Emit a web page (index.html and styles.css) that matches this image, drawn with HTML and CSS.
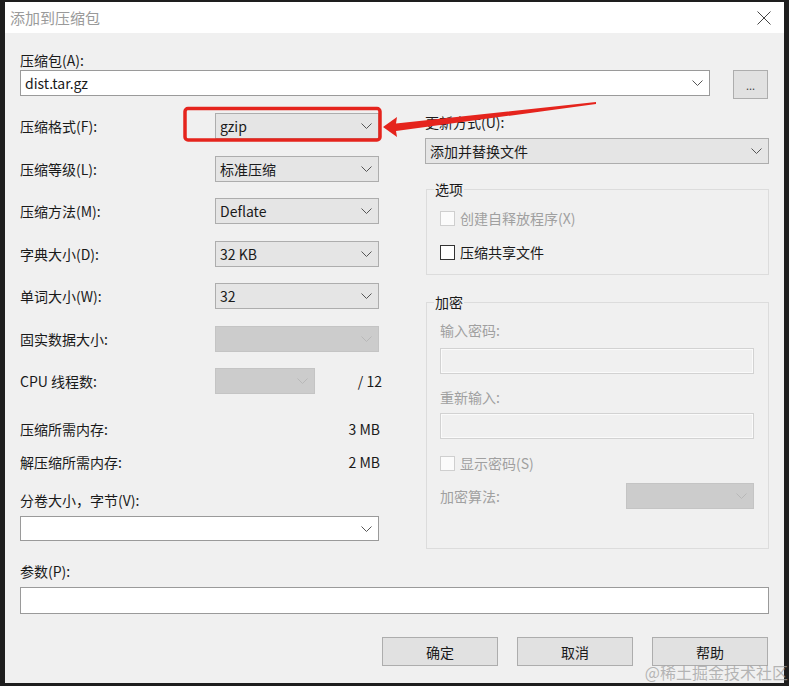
FILE: index.html
```html
<!DOCTYPE html>
<html lang="zh-CN">

<head>
  <meta charset="UTF-8">
  <title>添加到压缩包</title>
  <link rel="stylesheet" href="styles.css">
</head>

<body>
  <div class="screen">
    <div class="window">
      <div class="titlebar">
        <span class="title">添加到压缩包</span>
        <svg class="close" width="14" height="14" viewBox="0 0 14 14">
          <path d="M0.5 0.5 L13.5 13.5 M13.5 0.5 L0.5 13.5" stroke="#444" stroke-width="1" fill="none"/>
        </svg>
      </div>

      <div class="content">
        <div class="label">压缩包(A):</div>
        <div class="archive-row">
          <div class="combo white archive">
            <span>dist.tar.gz</span>
            <svg class="chev" width="11" height="6" viewBox="0 0 11 6"><polyline points="0.5,0.5 5.5,5.5 10.5,0.5" fill="none" stroke="#555"/></svg>
          </div>
          <div class="btn dots">...</div>
        </div>

        <div class="middle">
          <!-- left side -->
          <div class="col-left">
            <div class="rows">
              <div class="row">
                <span class="row-label">压缩格式(F):</span>
                <div class="combo">
                  <span>gzip</span>
                  <svg class="chev" width="11" height="6" viewBox="0 0 11 6"><polyline points="0.5,0.5 5.5,5.5 10.5,0.5" fill="none" stroke="#555"/></svg>
                </div>
              </div>
              <div class="row">
                <span class="row-label">压缩等级(L):</span>
                <div class="combo">
                  <span>标准压缩</span>
                  <svg class="chev" width="11" height="6" viewBox="0 0 11 6"><polyline points="0.5,0.5 5.5,5.5 10.5,0.5" fill="none" stroke="#555"/></svg>
                </div>
              </div>
              <div class="row">
                <span class="row-label">压缩方法(M):</span>
                <div class="combo">
                  <span>Deflate</span>
                  <svg class="chev" width="11" height="6" viewBox="0 0 11 6"><polyline points="0.5,0.5 5.5,5.5 10.5,0.5" fill="none" stroke="#555"/></svg>
                </div>
              </div>
              <div class="row">
                <span class="row-label">字典大小(D):</span>
                <div class="combo">
                  <span>32 KB</span>
                  <svg class="chev" width="11" height="6" viewBox="0 0 11 6"><polyline points="0.5,0.5 5.5,5.5 10.5,0.5" fill="none" stroke="#555"/></svg>
                </div>
              </div>
              <div class="row">
                <span class="row-label">单词大小(W):</span>
                <div class="combo">
                  <span>32</span>
                  <svg class="chev" width="11" height="6" viewBox="0 0 11 6"><polyline points="0.5,0.5 5.5,5.5 10.5,0.5" fill="none" stroke="#555"/></svg>
                </div>
              </div>
              <div class="row">
                <span class="row-label">固实数据大小:</span>
                <div class="combo disabled">
                  <span></span>
                  <svg class="chev" width="11" height="6" viewBox="0 0 11 6"><polyline points="0.5,0.5 5.5,5.5 10.5,0.5" fill="none" stroke="#b8b8b8"/></svg>
                </div>
              </div>
              <div class="row">
                <span class="row-label">CPU 线程数:</span>
                <div class="combo disabled small">
                  <span></span>
                  <svg class="chev" width="11" height="6" viewBox="0 0 11 6"><polyline points="0.5,0.5 5.5,5.5 10.5,0.5" fill="none" stroke="#b8b8b8"/></svg>
                </div>
                <span class="value">/ 12</span>
              </div>
            </div>

            <div class="mem first">
              <span>压缩所需内存:</span>
              <span>3 MB</span>
            </div>
            <div class="mem">
              <span>解压缩所需内存:</span>
              <span>2 MB</span>
            </div>

            <div class="label split-label">分卷大小，字节(V):</div>
            <div class="combo white split">
              <span></span>
              <svg class="chev" width="11" height="6" viewBox="0 0 11 6"><polyline points="0.5,0.5 5.5,5.5 10.5,0.5" fill="none" stroke="#555"/></svg>
            </div>
          </div>

          <!-- right side -->
          <div class="col-right">
            <div class="label">更新方式(U):</div>
            <div class="combo update">
              <span>添加并替换文件</span>
              <svg class="chev" width="11" height="6" viewBox="0 0 11 6"><polyline points="0.5,0.5 5.5,5.5 10.5,0.5" fill="none" stroke="#555"/></svg>
            </div>

            <fieldset class="group options">
              <legend>选项</legend>
              <div class="check disabled"><span class="box"></span>创建自释放程序(X)</div>
              <div class="check second"><span class="box"></span>压缩共享文件</div>
            </fieldset>

            <fieldset class="group crypt">
              <legend>加密</legend>
              <div class="label gray pw-label">输入密码:</div>
              <div class="pw-input"></div>
              <div class="label gray pw-label2">重新输入:</div>
              <div class="pw-input near"></div>
              <div class="check disabled show-pw"><span class="box"></span>显示密码(S)</div>
              <div class="algo">
                <span class="gray">加密算法:</span>
                <div class="combo disabled algo-combo">
                  <span></span>
                  <svg class="chev" width="11" height="6" viewBox="0 0 11 6"><polyline points="0.5,0.5 5.5,5.5 10.5,0.5" fill="none" stroke="#b8b8b8"/></svg>
                </div>
              </div>
            </fieldset>
          </div>
        </div>

        <div class="label param-label">参数(P):</div>
        <div class="param-input"></div>

        <div class="buttons">
          <div class="btn">确定</div>
          <div class="btn">取消</div>
          <div class="btn">帮助</div>
        </div>
      </div>
    </div>

    <!-- red annotation drawn on top of the screenshot -->
    <svg class="mark" width="789" height="686" viewBox="0 0 789 686">
      <rect x="185" y="108.5" width="195" height="31.5" rx="3" fill="none" stroke="#e5241d" stroke-width="3.5"/>
      <polygon points="383,127 397,117 396,123.5 596,102 596,104 396,131 397,137" fill="#e5241d"/>
    </svg>

    <div class="watermark">@稀土掘金技术社区</div>
  </div>
</body>

</html>
```

FILE: styles.css
```css
body {
  margin: 0;
  background: #1e1e1e;
  font-family: "Noto Sans CJK SC", "Noto Sans", sans-serif;
  font-size: 14px;
  line-height: 20px;
  color: #1a1a1a;
}

.screen {
  position: relative;
  width: 789px;
  height: 686px;
  padding: 2px 0 0 5px;
  box-sizing: border-box;
}

.window {
  width: 779px;
}

.titlebar {
  height: 31px;
  background: #fff;
  display: flex;
  align-items: center;
  justify-content: space-between;
  padding: 0 13px 0 5px;
}

.title {
  color: #9a9a9a;
  font-size: 15px;
}

.content {
  background: #f0f0f0;
  padding: 17px 15px 17px 15px;
}

.label {
  height: 20px;
}

.gray {
  color: #a0a0a0;
}

/* combo boxes */
.combo {
  display: flex;
  align-items: center;
  justify-content: space-between;
  height: 26px;
  box-sizing: border-box;
  background: #e5e5e5;
  border: 1px solid #adadad;
  padding: 0 6px 0 4px;
}

.combo.white {
  background: #fff;
  border-color: #9a9a9a;
}

.combo.disabled {
  background: #cccccc;
  border-color: #c4c4c4;
}

.archive-row {
  display: flex;
  align-items: flex-start;
  justify-content: space-between;
}

.archive {
  width: 690px;
}

.btn {
  background: #e1e1e1;
  border: 1px solid #adadad;
  box-sizing: border-box;
  display: flex;
  align-items: center;
  justify-content: center;
}

.dots {
  width: 35px;
  height: 29px;
  margin-right: 1px;
  font-size: 11px;
  color: #444;
}

/* middle block */
.middle {
  display: flex;
  margin-top: 13px;
  gap: 45px;
}

.col-left {
  width: 360px;
  padding-top: 1px;
}

.rows {
  display: flex;
  flex-direction: column;
  gap: 16.5px;
}

.row {
  display: flex;
  align-items: center;
  height: 26px;
}

.row-label {
  width: 195px;
}

.row .combo {
  width: 164px;
}

.row .combo.small {
  width: 100px;
}

.value {
  margin-left: auto;
  margin-right: -2px;
}

.mem {
  display: flex;
  justify-content: space-between;
  height: 20px;
  margin-top: 13px;
}

.mem.first {
  margin-top: 25px;
}

.split-label {
  margin-top: 18px;
}

.split {
  width: 359px;
  height: 25px;
  margin-top: 6px;
}

.col-right {
  width: 344px;
}

.update {
  margin-top: 6px;
}

/* group boxes */
.group {
  margin: 15px 0 0 1px;
  padding: 9px 14px 12px 13px;
  border: 1px solid #dcdcdc;
  min-width: 0;
}

.group legend {
  padding: 0 1px;
  margin-left: -6px;
  line-height: 20px;
}

.crypt {
  margin-top: 17px;
  padding-top: 8px;
  padding-bottom: 39px;
}

.check {
  display: flex;
  align-items: center;
  height: 20px;
  gap: 5px;
}

.check .box {
  width: 13px;
  height: 13px;
  border: 1px solid #333;
  background: #fff;
}

.check.disabled {
  color: #a0a0a0;
}

.check.disabled .box {
  border-color: #cfcfcf;
  background: #fbfbfb;
}

.check.second {
  margin-top: 14px;
}

.pw-input {
  height: 26px;
  box-sizing: border-box;
  margin-top: 8px;
  border: 1px solid #d2d2d2;
  box-shadow: inset 0 0 0 1px #fafafa;
  background: #f0f0f0;
}

.pw-input.near {
  margin-top: 6px;
}

.pw-label2 {
  margin-top: 13px;
}

.show-pw {
  margin-top: 14px;
}

.algo {
  display: flex;
  align-items: center;
  justify-content: space-between;
  height: 26px;
  margin-top: 10px;
}

.algo-combo {
  width: 128px;
}

/* bottom */
.param-label {
  margin-top: 12px;
}

.param-input {
  height: 27px;
  box-sizing: border-box;
  margin-top: 6px;
  background: #fff;
  border: 1px solid #9a9a9a;
}

.buttons {
  display: flex;
  justify-content: flex-end;
  gap: 19px;
  margin-top: 23px;
  padding-right: 1px;
}

.buttons .btn {
  width: 116px;
  height: 29px;
}

.mark {
  position: absolute;
  left: 0;
  top: 0;
  pointer-events: none;
}

.watermark {
  position: absolute;
  right: 1px;
  bottom: 4px;
  font-size: 16px;
  line-height: 20px;
  color: rgba(160, 160, 160, 0.75);
}
```
